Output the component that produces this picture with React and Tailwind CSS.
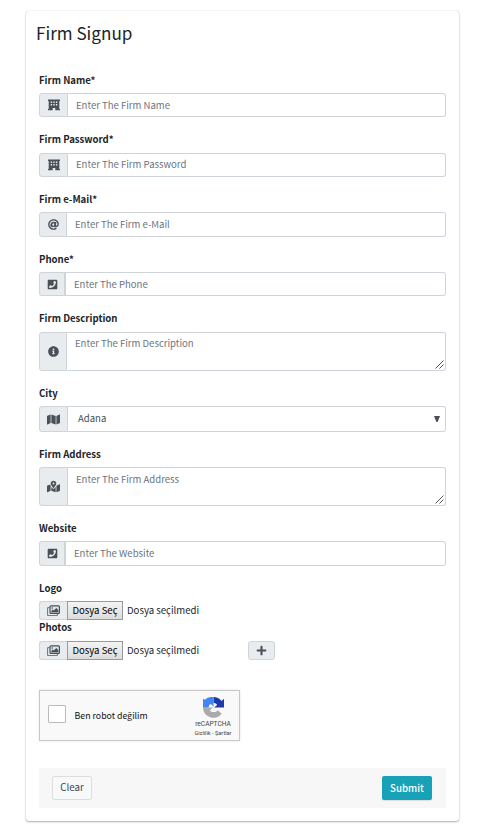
import {
  FaAt,
  FaPhoneSquare,
  FaInfoCircle,
  FaMap,
  FaMapMarkedAlt,
  FaPlus,
} from "react-icons/fa";

function Label({ children }) {
  return <div className="h-[18px] text-[9.6px] leading-[18px] font-bold text-[#212529]">{children}</div>;
}

function BuildingIcon({ className }) {
  return (
    <svg className={className} viewBox="0 0 12 12" fill="currentColor">
      <path
        fillRule="evenodd"
        d="M0 .5h12v1.500h-.7v8H12v1.300H7.300V9H4.700v2.300H0V10h.7V2H0zM2.700 2.500v1.500h1.400V2.500zM5.300 2.500v1.500h1.400V2.500zM7.900 2.500v1.500h1.400V2.500zM2.700 5v1.500h1.400V5zM5.300 5v1.500h1.400V5zM7.900 5v1.500h1.400V5z"
      />
    </svg>
  );
}

function ImagesIcon({ className }) {
  return (
    <svg className={className} viewBox="0 0 13 11" fill="none">
      <path d="M2.500 2.500H1.500a1 1 0 0 0-1 1v6a1 1 0 0 0 1 1h8a1 1 0 0 0 1-1v-.8" stroke="#6f7d8c" strokeWidth="1.200" />
      <rect x="3" y="0.900" width="9.400" height="7.400" rx="0.900" stroke="#495057" strokeWidth="1.200" fill="#dfe6ec" />
      <path d="M4.300 7.200V6l1.500-1.400 1 1L9.300 3l2 2v2.200z" fill="#495057" />
      <circle cx="5.200" cy="3" r="0.800" fill="#495057" />
    </svg>
  );
}

function Field({ label, icon: Icon, iconSize, addon, place, outer, gap, height, area, select, text }) {
  return (
    <div className={outer}>
      <Label>{label}</Label>
      <div className={`flex w-[407px] ${gap} ${height}`}>
        <div
          className={`flex shrink-0 items-center justify-center rounded-l-[3px] border border-[#ced4da] bg-[#e9ecef] text-[#495057] ${addon}`}
        >
          <Icon className={iconSize} />
        </div>
        <div
          className={`relative flex min-w-0 flex-1 rounded-r-[3px] border border-l-0 border-[#ced4da] text-[9.55px] leading-[15px] ${text} ${
            select ? "justify-between pl-[10px] pr-[5px] text-[#495057]" : "pl-[8px] text-[#6c757d]"
          }`}
        >
          <span>{place}</span>
          {select && (
            <svg className="h-[6px] w-[6px]" viewBox="0 0 6 6">
              <path d="M0 0h6L3.600 6H2.400z" fill="#495057" />
            </svg>
          )}
          {area && (
            <svg className="absolute right-px bottom-px h-[9px] w-[9px]" viewBox="0 0 9 9">
              <path d="M.5 8.500l8-8M4.500 8.500l4-4" stroke="#444" strokeWidth="0.900" fill="none" />
            </svg>
          )}
        </div>
      </div>
    </div>
  );
}

function FileInput() {
  return (
    <div className="flex h-[19px] items-center text-[9.6px] text-[#212529]">
      <div className="flex h-[19px] w-[28px] items-center justify-center rounded-l-[3px] border border-r-0 border-[#ced4da] bg-[#e9ecef]">
        <ImagesIcon className="h-[11px] w-[13px]" />
      </div>
      <div className="flex h-[19px] w-[56px] items-center justify-center border border-[#999] bg-linear-to-b from-[#f4f4f4] to-[#dcdcdc] pb-px leading-[15px] whitespace-nowrap text-black">
        Dosya Seç
      </div>
      <span className="ml-[4px] pb-px leading-[15px]">Dosya seçilmedi</span>
    </div>
  );
}

function CaptchaLogo() {
  return (
    <svg className="h-[21px] w-[21px]" viewBox="0 0 64 64">
      <path d="M64 32V5l-7.500 7.500A32 32 0 0 0 32 0v18c5 0 9 2 11 6l-9 8z" fill="#1c3aa9" />
      <path d="M32 0H31A32 32 0 0 0 6 8L0 5v27a32 32 0 0 0 0 1h17c0-6 3-11 7-12l8 8z" fill="#4285f4" />
      <path d="M0 32a32 32 0 0 0 57 19l-12-11c-3 4-7 6-12 6-6 0-10-2-12-6l9-8z" fill="#ababab" />
    </svg>
  );
}

export default function App() {
  return (
    <div className="h-[837px] w-[500px] overflow-hidden bg-white pt-[11px] pl-[26px] font-['Noto_Sans_CJK_SC','Open_Sans',sans-serif]">
      <div className="h-[810px] w-[433px] rounded-[3px] bg-white px-[13px] shadow-[0_0_1px_rgba(0,0,0,0.25),0_1px_2px_rgba(0,0,0,0.3)]">
        <h1 className="-ml-[3px] h-[60px] pt-[9px] text-[17.1px] leading-[26px] font-normal text-[#212529]">Firm Signup</h1>
        <Field label="Firm Name*" icon={BuildingIcon} iconSize="size-[12px]" addon="w-[29px]" place="Enter The Firm Name" outer="" gap="mt-[4px]" height="h-[24px]" text="items-center" />
        <Field label="Firm Password*" icon={BuildingIcon} iconSize="size-[12px]" addon="w-[29px]" place="Enter The Firm Password" outer="mt-[13px]" gap="mt-[5px]" height="h-[24px]" text="items-center pb-px" />
        <Field label="Firm e-Mail*" icon={FaAt} iconSize="size-[11px]" addon="w-[28px]" place="Enter The Firm e-Mail" outer="mt-[13px]" gap="mt-[4px]" height="h-[25px]" text="items-center pb-px" />
        <Field label="Phone*" icon={FaPhoneSquare} iconSize="size-[11px]" addon="w-[27px] border-r-2" place="Enter The Phone" outer="mt-[13px]" gap="mt-[4px]" height="h-[24px]" text="items-center" />
        <Field label="Firm Description" icon={FaInfoCircle} iconSize="size-[11px]" addon="w-[28px]" place="Enter The Firm Description" outer="mt-[13px]" gap="mt-[5px]" height="h-[39px]" text="items-start pt-[3px]" area />
        <Field label="City" icon={FaMap} iconSize="size-[13px]" addon="w-[29px]" place="Adana" outer="mt-[13px]" gap="mt-[4px]" height="h-[26px]" text="items-center pb-px" select />
        <Field label="Firm Address" icon={FaMapMarkedAlt} iconSize="size-[13px]" addon="w-[29px]" place="Enter The Firm Address" outer="mt-[13px]" gap="mt-[4px]" height="h-[39px]" text="items-start pt-[4px]" area />
        <Field label="Website" icon={FaPhoneSquare} iconSize="size-[11px]" addon="w-[27px] border-r-2" place="Enter The Website" outer="mt-[13px]" gap="mt-[4px]" height="h-[25px]" text="items-center pb-px" />
        <div className="mt-[13px]">
          <Label>Logo</Label>
          <div className="mt-[4px]">
            <FileInput />
          </div>
        </div>
        <div className="-mt-[2px]">
          <Label>Photos</Label>
          <div className="mt-[5px] flex">
            <div className="w-[209px]">
              <FileInput />
            </div>
            <button className="flex h-[19px] w-[27px] items-center justify-center rounded-[3px] border border-[#ced4da] bg-[#e9ecef] text-[#495057]">
              <FaPlus className="size-[11px]" />
            </button>
          </div>
        </div>
        <div className="mt-[30px] flex h-[51px] w-[201px] border border-[#c8c8c8] bg-[#f9f9f9] shadow-[0_0_2px_rgba(0,0,0,0.12)]">
          <div className="mt-[14px] ml-[8px] size-[18px] rounded-[1px] border border-[#bababa] bg-white" />
          <div className="mt-[17px] ml-[8.500px] text-[8.8px] leading-[15px] text-[#111]">Ben robot değilim</div>
          <div className="mt-[6px] ml-auto flex w-[52px] flex-col items-center font-[Roboto,sans-serif] whitespace-nowrap text-[#444]">
            <CaptchaLogo />
            <div className="mt-[2px] text-[6.6px] leading-[8px]">reCAPTCHA</div>
            <div className="mt-px text-[5.600px] leading-[8px]">Gizlilik - Şartlar</div>
          </div>
        </div>
        <div className="mt-[27px] flex h-[40px] w-[407px] items-center justify-between bg-[#f7f7f7] pr-[14px] pl-[13px] text-[9.7px]">
          <button className="h-[24px] w-[40px] rounded-[2px] border border-[#ddd] bg-[#f8f9fa] pb-px leading-[21px] text-[#444]">Clear</button>
          <button className="h-[24px] w-[50px] rounded-[2px] bg-[#17a2b8] pb-px leading-[22px] font-medium text-white shadow-[0_1px_1px_rgba(0,0,0,0.1)]">Submit</button>
        </div>
      </div>
    </div>
  );
}
